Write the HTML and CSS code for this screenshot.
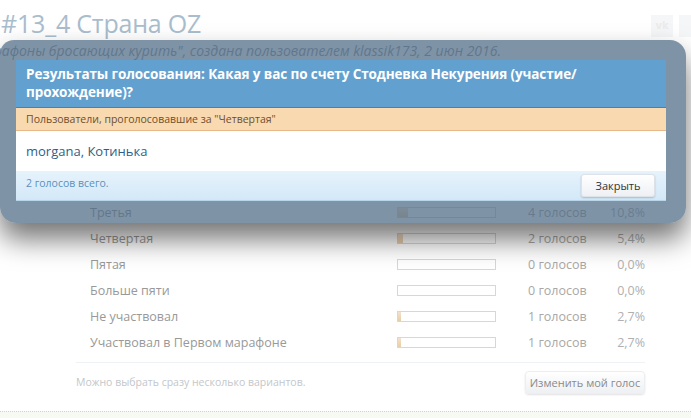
FILE: index.html
```html
<!DOCTYPE html>
<html lang="ru">
<head>
<meta charset="utf-8">
<title>#13_4 Страна OZ</title>
<link rel="stylesheet" href="styles.css">
</head>
<body>
<div class="page">
  <div class="share">
    <span class="share-btn">vk</span>
    <span class="share-btn"></span>
  </div>
  <h1 class="title">#13_4 Страна OZ</h1>
  <p class="subtitle">Марафоны бросающих курить", создана пользователем klassik173, 2 июн 2016.</p>

  <div class="poll">
    <div class="row"><span class="label">Третья</span><span class="bar"><span class="fill" style="width:10.8%"></span></span><span class="votes">4 голосов</span><span class="pct">10,8%</span></div>
    <div class="row"><span class="label">Четвертая</span><span class="bar"><span class="fill" style="width:5.4%"></span></span><span class="votes">2 голосов</span><span class="pct">5,4%</span></div>
    <div class="row"><span class="label">Пятая</span><span class="bar"></span><span class="votes">0 голосов</span><span class="pct">0,0%</span></div>
    <div class="row"><span class="label">Больше пяти</span><span class="bar"></span><span class="votes">0 голосов</span><span class="pct">0,0%</span></div>
    <div class="row"><span class="label">Не участвовал</span><span class="bar"><span class="fill" style="width:2.7%"></span></span><span class="votes">1 голосов</span><span class="pct">2,7%</span></div>
    <div class="row"><span class="label">Участвовал в Первом марафоне</span><span class="bar"><span class="fill" style="width:2.7%"></span></span><span class="votes">1 голосов</span><span class="pct">2,7%</span></div>
    <div class="poll-foot">
      <span class="note">Можно выбрать сразу несколько вариантов.</span>
      <button class="btn-change">Изменить мой голос</button>
    </div>
  </div>
  <div class="dotted"></div>
</div>

<div class="overlay">
  <div class="dialog">
    <h2 class="dlg-head">Результаты голосования: Какая у вас по счету Стодневка Некурения (участие/ прохождение)?</h2>
    <div class="dlg-sub">Пользователи, проголосовавшие за "Четвертая"</div>
    <div class="dlg-users"><a href="#">morgana</a>, <a href="#">Котинька</a></div>
    <div class="dlg-foot">
      <span class="total">2 голосов всего.</span>
      <button class="btn-close">Закрыть</button>
    </div>
  </div>
</div>
</body>
</html>
```

FILE: styles.css
```css
html, body {
  margin: 0;
  padding: 0;
  background: #ffffff;
  overflow: hidden;
}
body {
  width: 691px;
  height: 418px;
  position: relative;
  font-family: "Open Sans", "DejaVu Sans", sans-serif;
}
.page {
  position: relative;
}
.share {
  position: absolute;
  right: -10px;
  top: 15px;
  display: flex;
  gap: 6px;
}
.share-btn {
  width: 22px;
  height: 22px;
  background: #f5f6f7;
  color: #ececec;
  font: bold 10px/22px "DejaVu Sans", sans-serif;
  text-align: center;
}
.title {
  margin: 0;
  padding: 7px 0 0 1px;
  font-weight: 400;
  font-size: 25px;
  line-height: 32px;
  color: #a9bdcd;
  letter-spacing: -0.2px;
}
.subtitle {
  margin: 2px 0 0 -26px;
  font-style: italic;
  font-size: 14px;
  line-height: 20px;
  color: #8d9aa6;
  white-space: nowrap;
}
.poll {
  margin: 138px 0 0 76px;
  width: 569px;
}
.row {
  display: flex;
  align-items: center;
  height: 26px;
  font-size: 12.5px;
}
.label {
  width: 307px;
  padding-left: 14px;
  color: #999999;
}
.bar {
  width: 97px;
  height: 9px;
  border: 1px solid #efd3ad;
  background: #fff;
  display: flex;
}
.fill {
  height: 100%;
  background: linear-gradient(#f3e2cc, #e8cda9);
}
.votes {
  margin-left: 32px;
  width: 80px;
  color: #a8a8a8;
}
.pct {
  flex: 1;
  text-align: right;
  color: #b0b0b0;
}
.poll-foot {
  margin-top: 7px;
  border-top: 1px solid #eef2f5;
  padding-top: 8px;
  display: flex;
  justify-content: space-between;
  align-items: center;
}
.note {
  font-size: 10.5px;
  color: #c3c7cb;
  margin-top: -2px;
}
.btn-change {
  font-family: inherit;
  font-size: 11px;
  color: #8a8a8a;
  background: linear-gradient(#ffffff, #eef0f3);
  border: 1px solid #eceef1;
  border-radius: 4px;
  box-shadow: 0 1px 2px rgba(0,0,0,0.12);
  width: 120px;
  height: 23px;
  padding: 0;
}
.dotted {
  margin-top: 17px;
  border-top: 1px dotted #c9d4dc;
  height: 10px;
  background: #f6faf2;
}

/* overlay dialog */
.overlay {
  position: absolute;
  left: 0;
  top: 40px;
  width: 646px;
  padding: 20px 20px 22px 20px;
  border-radius: 14px 16px 16px 16px;
  background: rgba(78, 106, 132, 0.72);
  box-shadow: 0 16px 28px rgba(0,0,0,0.55);
}
.dialog {
  width: 650px;
  margin-left: -4px;
  background: #fff;
}
.dlg-head {
  margin: 0;
  background: #62a1cf;
  color: #ffffff;
  font-size: 13.5px;
  font-weight: 700;
  line-height: 18px;
  padding: 5px 10px 6px 10px;
  border-bottom: 1px solid #4f7fa3;
  letter-spacing: -0.1px;
}
.dlg-sub {
  background: #f8d9b0;
  color: #6e4f2e;
  font-size: 10.5px;
  line-height: 22px;
  padding: 0 10px;
  border-bottom: 1px solid #e7b98a;
}
.dlg-users {
  padding: 0 10px;
  height: 40px;
  line-height: 40px;
  font-size: 13px;
  color: #2f5f87;
}
.dlg-users a {
  color: #2f5f87;
  text-decoration: none;
}
.dlg-foot {
  height: 29px;
  background: linear-gradient(#e6f3fc, #d3e8f7);
  border-bottom: 1px solid #b8d5ea;
  display: flex;
  align-items: center;
  justify-content: space-between;
  padding: 0 11px 0 10px;
}
.total {
  font-size: 10.5px;
  color: #5a91bd;
  margin-top: -6px;
}
.btn-close {
  font-family: inherit;
  font-size: 11px;
  color: #333;
  width: 74px;
  height: 23px;
  padding: 0;
  background: linear-gradient(#ffffff, #eef0f4);
  border: 1px solid #dde2e8;
  border-radius: 3px;
  box-shadow: 0 1px 2px rgba(0,0,0,0.2);
}
```
